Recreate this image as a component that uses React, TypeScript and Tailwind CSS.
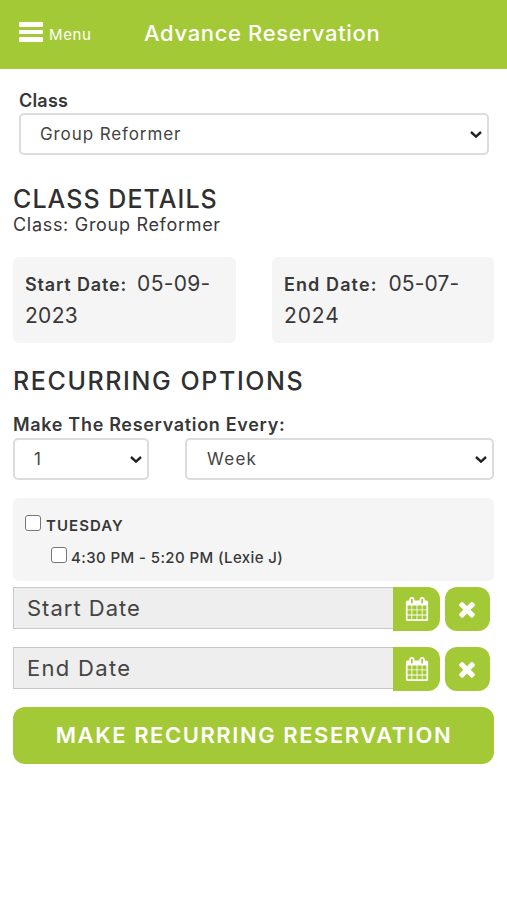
import { useState } from 'react';

const CalendarIcon = () => (
    <svg className="mb-px ml-px h-6 w-6" viewBox="0 0 1792 1792" fill="currentColor" aria-hidden="true">
        <path d="M192 1664h288v-288h-288v288zm352 0h320v-288h-320v288zm-352-352h288v-320h-288v320zm352 0h320v-320h-320v320zm-352-384h288v-288h-288v288zm736 736h320v-288h-320v288zm-384-736h320v-288h-320v288zm768 736h288v-288h-288v288zm-384-352h320v-320h-320v320zm-352-864v-288q0-13-9.5-22.5t-22.5-9.5h-64q-13 0-22.5 9.5t-9.5 22.5v288q0 13 9.5 22.5t22.5 9.5h64q13 0 22.5-9.5t9.5-22.5zm736 864h288v-320h-288v320zm-384-384h320v-288h-320v288zm384 0h288v-288h-288v288zm32-480v-288q0-13-9.5-22.5t-22.5-9.5h-64q-13 0-22.5 9.5t-9.5 22.5v288q0 13 9.5 22.5t22.5 9.5h64q13 0 22.5-9.5t9.5-22.5zm384-64v1280q0 52-38 90t-90 38h-1408q-52 0-90-38t-38-90v-1280q0-52 38-90t90-38h128v-96q0-66 47-113t113-47h64q66 0 113 47t47 113v96h384v-96q0-66 47-113t113-47h64q66 0 113 47t47 113v96h128q52 0 90 38t38 90z" />
    </svg>
);

const TimesIcon = () => (
    <svg className="mr-px mb-px h-6 w-6" viewBox="0 0 1792 1792" fill="currentColor" aria-hidden="true">
        <path d="M1490 1322q0 40-28 68l-136 136q-28 28-68 28t-68-28l-294-294-294 294q-28 28-68 28t-68-28l-136-136q-28-28-28-68t28-68l294-294-294-294q-28-28-28-68t28-68l136-136q28-28 68-28t68 28l294 294 294-294q28-28 68-28t68 28l136 136q28 28 28 68t-28 68l-294 294 294 294q28 28 28 68z" />
    </svg>
);

const Chevron = () => (
    <svg className="mr-[5px] h-[7px] w-3 shrink-0" viewBox="0 0 12 7" fill="none" stroke="#222" strokeWidth="2.4" aria-hidden="true">
        <path d="M1 1l5 4.6L11 1" />
    </svg>
);

const SelectBox = ({ value, className }: { value: string; className: string }) => (
    <button type="button" className={`flex h-[42px] items-center justify-between rounded-[5px] border-2 border-[#dcdcdc] bg-white text-[17px] leading-6 text-[#444] ${className}`}>
        <span>{value}</span>
        <Chevron />
    </button>
);

const DateField = ({ label, tracking }: { label: string; tracking: string }) => (
    <div className="flex h-11">
        <div className={`h-[42px] w-[380px] border border-r-0 border-[#c8c8c8] bg-[#eee] pl-[13px] text-[22px] leading-10 text-[#444] ${tracking}`}>{label}</div>
        <button type="button" aria-label={`Choose ${label}`} className="flex w-[47px] items-center justify-center rounded-r-[12px] bg-[#a4c936] text-white">
            <CalendarIcon />
        </button>
        <button type="button" aria-label={`Clear ${label}`} className="ml-[5px] flex w-[45px] items-center justify-center rounded-[12px] bg-[#a4c936] text-white">
            <TimesIcon />
        </button>
    </div>
);

const Checkbox = ({ checked, onChange }: { checked: boolean; onChange: () => void }) => (
    <input
        type="checkbox"
        checked={checked}
        onChange={onChange}
        className="h-4 w-4 shrink-0 appearance-none rounded-[3px] border border-[#777] bg-white checked:bg-[#a4c936]"
    />
);

const App = () => {
    const [day, setDay] = useState(false);
    const [slot, setSlot] = useState(false);

    return (
        <div className="h-[900px] w-[507px] overflow-hidden bg-white font-['Inter',sans-serif] text-[#383838]">
            <header className="flex h-[69px] bg-[#a4c936] text-white">
                <button type="button" className="flex h-full w-[144px] pl-[19px]">
                    <span className="mt-[22px] flex h-5 w-6 flex-col justify-between">
                        <span className="h-[5px] rounded-[1px] bg-white" />
                        <span className="h-[4px] rounded-[1px] bg-white" />
                        <span className="h-[5px] rounded-[1px] bg-white" />
                    </span>
                    <span className="mt-[25px] ml-[6px] text-[15px] leading-5 tracking-[0.6px]">Menu</span>
                </button>
                <h1 className="mt-[18px] text-[22px] leading-[30px] font-medium tracking-[0.65px] whitespace-nowrap">Advance Reservation</h1>
            </header>

            <main className="px-[13px]">
                <section className="px-[6px] pt-[21px]">
                    <p className="h-[23px] text-[18px] leading-[22px] font-semibold tracking-[0.2px]">Class</p>
                    <SelectBox value="Group Reformer" className="w-[470px] pl-[19px] tracking-[0.9px]" />
                </section>

                <h2 className="mt-[29px] text-[25px] leading-[30px] font-medium tracking-[1.05px] text-[#303030]">CLASS DETAILS</h2>
                <p className="text-[18px] leading-[22px] tracking-[0.7px]">Class: Group Reformer</p>

                <div className="mt-[21px] flex justify-between">
                    <div className="h-[86px] w-[223px] rounded-[6px] bg-[#f5f5f5] pt-[11px] pl-3 text-[21px] leading-[31px] tracking-[0.3px]">
                        <span className="text-[18px] font-semibold tracking-[0.85px]">Start Date:</span>
                        <span className="ml-[10px]">05-09-</span>
                        <br />
                        2023
                    </div>
                    <div className="h-[86px] w-[222px] rounded-[6px] bg-[#f5f5f5] pt-[11px] pl-3 text-[21px] leading-[31px] tracking-[0.3px]">
                        <span className="text-[18px] font-semibold tracking-[1.1px]">End Date:</span>
                        <span className="ml-[11px] tracking-[0.1px]">05-07-</span>
                        <br />
                        <span className="tracking-[0.9px]">2024</span>
                    </div>
                </div>

                <h2 className="mt-[23px] text-[25px] leading-[30px] font-medium tracking-[1.6px] text-[#303030]">RECURRING OPTIONS</h2>
                <p className="mt-[17px] h-[25px] text-[18px] leading-[24px] font-semibold tracking-[0.68px]">Make The Reservation Every:</p>
                <div className="flex justify-between">
                    <SelectBox value="1" className="w-[136px] pl-[19px]" />
                    <SelectBox value="Week" className="w-[309px] pl-5 tracking-[1.3px]" />
                </div>

                <div className="mt-[18px] h-[83px] rounded-[6px] bg-[#f5f5f5] pt-[17px] pl-3">
                    <label className="flex h-[32px]">
                        <Checkbox checked={day} onChange={() => setDay(!day)} />
                        <span className="ml-[5px] pt-px text-[15px] leading-5 font-semibold tracking-[1.05px]">TUESDAY</span>
                    </label>
                    <label className="ml-[26px] flex">
                        <Checkbox checked={slot} onChange={() => setSlot(!slot)} />
                        <span className="ml-[4px] pt-px text-[15px] leading-5 font-medium tracking-[0.4px]">4:30 PM - 5:20 PM (Lexie J)</span>
                    </label>
                </div>

                <div className="mt-[6px] flex flex-col gap-4">
                    <DateField label="Start Date" tracking="tracking-[1px]" />
                    <DateField label="End Date" tracking="tracking-[1.3px]" />
                </div>

                <button type="button" className="mt-4 flex h-[57px] w-[481px] items-center justify-center rounded-[12px] bg-[#a4c936] pb-px pl-px text-[22px] font-semibold tracking-[1.55px] whitespace-nowrap text-white">
                    MAKE RECURRING RESERVATION
                </button>
            </main>
        </div>
    );
};

export default App;
